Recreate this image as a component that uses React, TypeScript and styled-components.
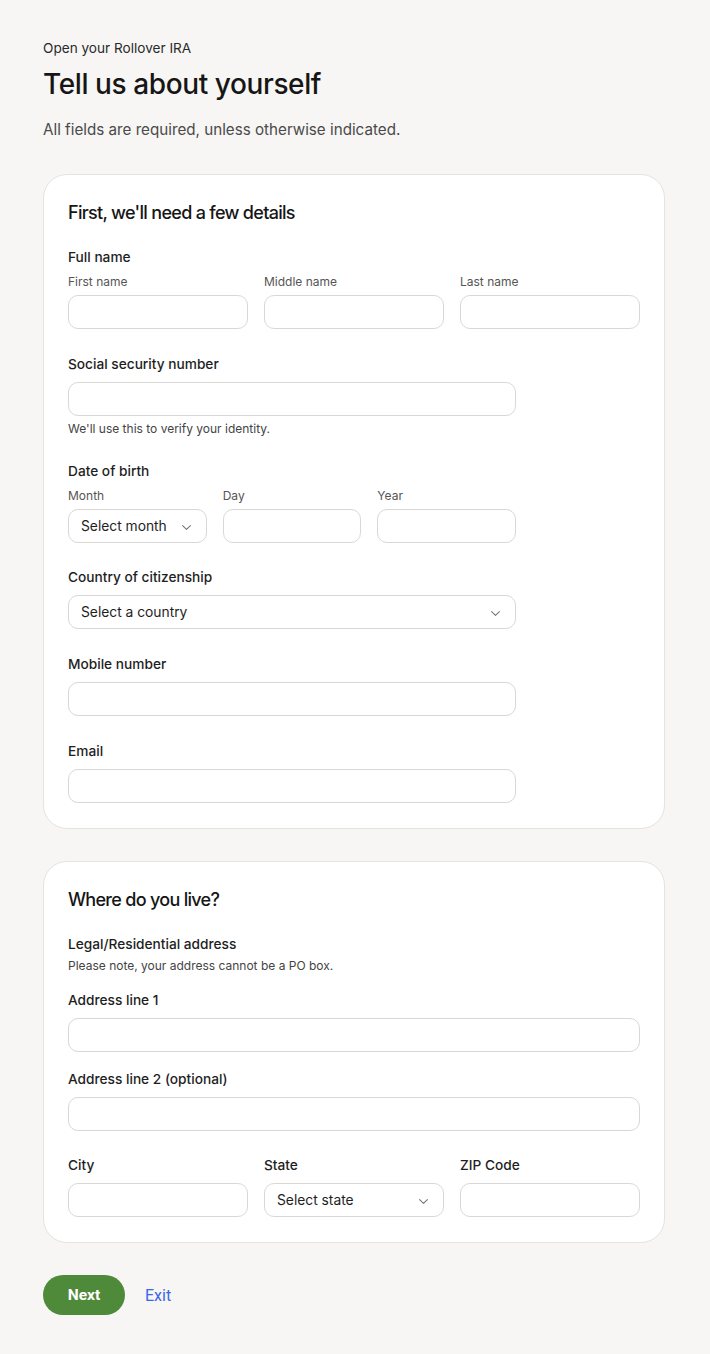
import React from "react";
import styled, { createGlobalStyle } from "styled-components";

const GlobalStyle = createGlobalStyle`
  html, body { margin: 0; padding: 0; background: #f7f6f4; }
  body { font-family: Inter, "Noto Sans", Arial, sans-serif; color: #1c1c1c; -webkit-font-smoothing: antialiased; }
  * { box-sizing: border-box; }
`;

const Page = styled.div`
  padding: 38px 45px 40px 43px;
  display: flex;
  flex-direction: column;
`;

const Eyebrow = styled.div`
  font-size: 13.6px;
  line-height: 20px;
  color: #2a2a2a;
`;

const Title = styled.h1`
  margin: 8px 0 0;
  font-size: 28px;
  line-height: 36px;
  font-weight: 500;
  letter-spacing: -0.4px;
  color: #161616;
`;

const Subtitle = styled.p`
  margin: 17px 0 0;
  font-size: 15.2px;
  line-height: 22px;
  color: #4a4a4a;
`;

const Card = styled.section<{ $top?: number }>`
  margin-top: ${(p) => p.$top ?? 32}px;
  background: #fff;
  border: 1px solid #e4e3e0;
  border-radius: 24px;
  padding: 24px 24px 25px;
`;

const CardTitle = styled.h2`
  margin: 0 0 20px;
  font-size: 18px;
  line-height: 28px;
  font-weight: 500;
  letter-spacing: -0.7px;
  color: #161616;
`;

const Field = styled.div<{ $gap?: number }>`
  display: flex;
  flex-direction: column;
  margin-top: ${(p) => p.$gap ?? 25}px;
  &:first-of-type { margin-top: 0; }
`;

const Label = styled.div<{ $mb?: number }>`
  font-size: 13.7px;
  line-height: 20px;
  font-weight: 500;
  color: #1e1e1e;
  margin-bottom: ${(p) => p.$mb ?? 8}px;
`;

const SubLabel = styled.div`
  font-size: 12px;
  line-height: 16px;
  color: #555;
  margin-bottom: 5px;
`;

const Helper = styled.div<{ $mt?: number }>`
  font-size: 12px;
  line-height: 16px;
  color: #444;
  margin-top: ${(p) => p.$mt ?? 4}px;
`;

const Row = styled.div<{ $width?: number }>`
  display: grid;
  grid-template-columns: repeat(3, 1fr);
  column-gap: 16px;
  width: ${(p) => (p.$width ? `${p.$width}px` : "100%")};
`;

const Col = styled.div`
  display: flex;
  flex-direction: column;
  min-width: 0;
`;

const Input = styled.input<{ $width?: number }>`
  height: 34px;
  width: ${(p) => (p.$width ? `${p.$width}px` : "100%")};
  border: 1px solid #d9d8d5;
  border-radius: 10px;
  background: #fff;
  padding: 0 12px;
  font: inherit;
  font-size: 14px;
  outline: none;
`;

const SelectBox = styled.div<{ $width?: number }>`
  height: 34px;
  width: ${(p) => (p.$width ? `${p.$width}px` : "100%")};
  border: 1px solid #d9d8d5;
  border-radius: 10px;
  background: #fff;
  padding: 0 15px 0 12px;
  display: flex;
  align-items: center;
  justify-content: space-between;
  font-size: 13.8px;
  color: #1e1e1e;
  svg { margin-top: 3px; }
`;

const Chevron = () => (
  <svg width="9" height="5" viewBox="0 0 9 5" fill="none">
    <path d="M0.6 0.6l3.9 3.8 3.9-3.8" stroke="#777" strokeWidth="1.1" strokeLinecap="round" strokeLinejoin="round" />
  </svg>
);

const Select = ({ text, width }: { text: string; width?: number }) => (
  <SelectBox $width={width}>
    <span>{text}</span>
    <Chevron />
  </SelectBox>
);

const Actions = styled.div`
  margin-top: 32px;
  display: flex;
  align-items: center;
  gap: 20px;
`;

const NextButton = styled.button`
  height: 40px;
  width: 82px;
  border: none;
  border-radius: 20px;
  background: #4e8a3a;
  color: #fff;
  font-family: Roboto, Arial, sans-serif;
  font-size: 15.5px;
  font-weight: 700;
  cursor: pointer;
`;

const ExitLink = styled.a`
  font-family: Roboto, Arial, sans-serif;
  font-size: 16px;
  color: #3a67e8;
  text-decoration: none;
`;

export default function App() {
  return (
    <>
      <GlobalStyle />
      <Page>
        <Eyebrow>Open your Rollover IRA</Eyebrow>
        <Title>Tell us about yourself</Title>
        <Subtitle>All fields are required, unless otherwise indicated.</Subtitle>

        <Card $top={33}>
          <CardTitle>First, we'll need a few details</CardTitle>

          <Field>
            <Label $mb={7}>Full name</Label>
            <Row>
              <Col>
                <SubLabel>First name</SubLabel>
                <Input />
              </Col>
              <Col>
                <SubLabel>Middle name</SubLabel>
                <Input />
              </Col>
              <Col>
                <SubLabel>Last name</SubLabel>
                <Input />
              </Col>
            </Row>
          </Field>

          <Field>
            <Label>Social security number</Label>
            <Input $width={448} />
            <Helper $mt={5}>We'll use this to verify your identity.</Helper>
          </Field>

          <Field $gap={24}>
            <Label $mb={7}>Date of birth</Label>
            <Row $width={448}>
              <Col>
                <SubLabel>Month</SubLabel>
                <Select text="Select month" />
              </Col>
              <Col>
                <SubLabel>Day</SubLabel>
                <Input />
              </Col>
              <Col>
                <SubLabel>Year</SubLabel>
                <Input />
              </Col>
            </Row>
          </Field>

          <Field $gap={24}>
            <Label>Country of citizenship</Label>
            <Select text="Select a country" width={448} />
          </Field>

          <Field>
            <Label>Mobile number</Label>
            <Input $width={448} />
          </Field>

          <Field>
            <Label>Email</Label>
            <Input $width={448} />
          </Field>
        </Card>

        <Card>
          <CardTitle>Where do you live?</CardTitle>

          <Field>
            <Label $mb={0}>Legal/Residential address</Label>
            <Helper>Please note, your address cannot be a PO box.</Helper>
          </Field>

          <Field $gap={16}>
            <Label>Address line 1</Label>
            <Input />
          </Field>

          <Field $gap={17}>
            <Label>Address line 2 (optional)</Label>
            <Input />
          </Field>

          <Field $gap={24}>
            <Row>
              <Col>
                <Label>City</Label>
                <Input />
              </Col>
              <Col>
                <Label>State</Label>
                <Select text="Select state" />
              </Col>
              <Col>
                <Label>ZIP Code</Label>
                <Input />
              </Col>
            </Row>
          </Field>
        </Card>

        <Actions>
          <NextButton>Next</NextButton>
          <ExitLink href="#">Exit</ExitLink>
        </Actions>
      </Page>
    </>
  );
}
